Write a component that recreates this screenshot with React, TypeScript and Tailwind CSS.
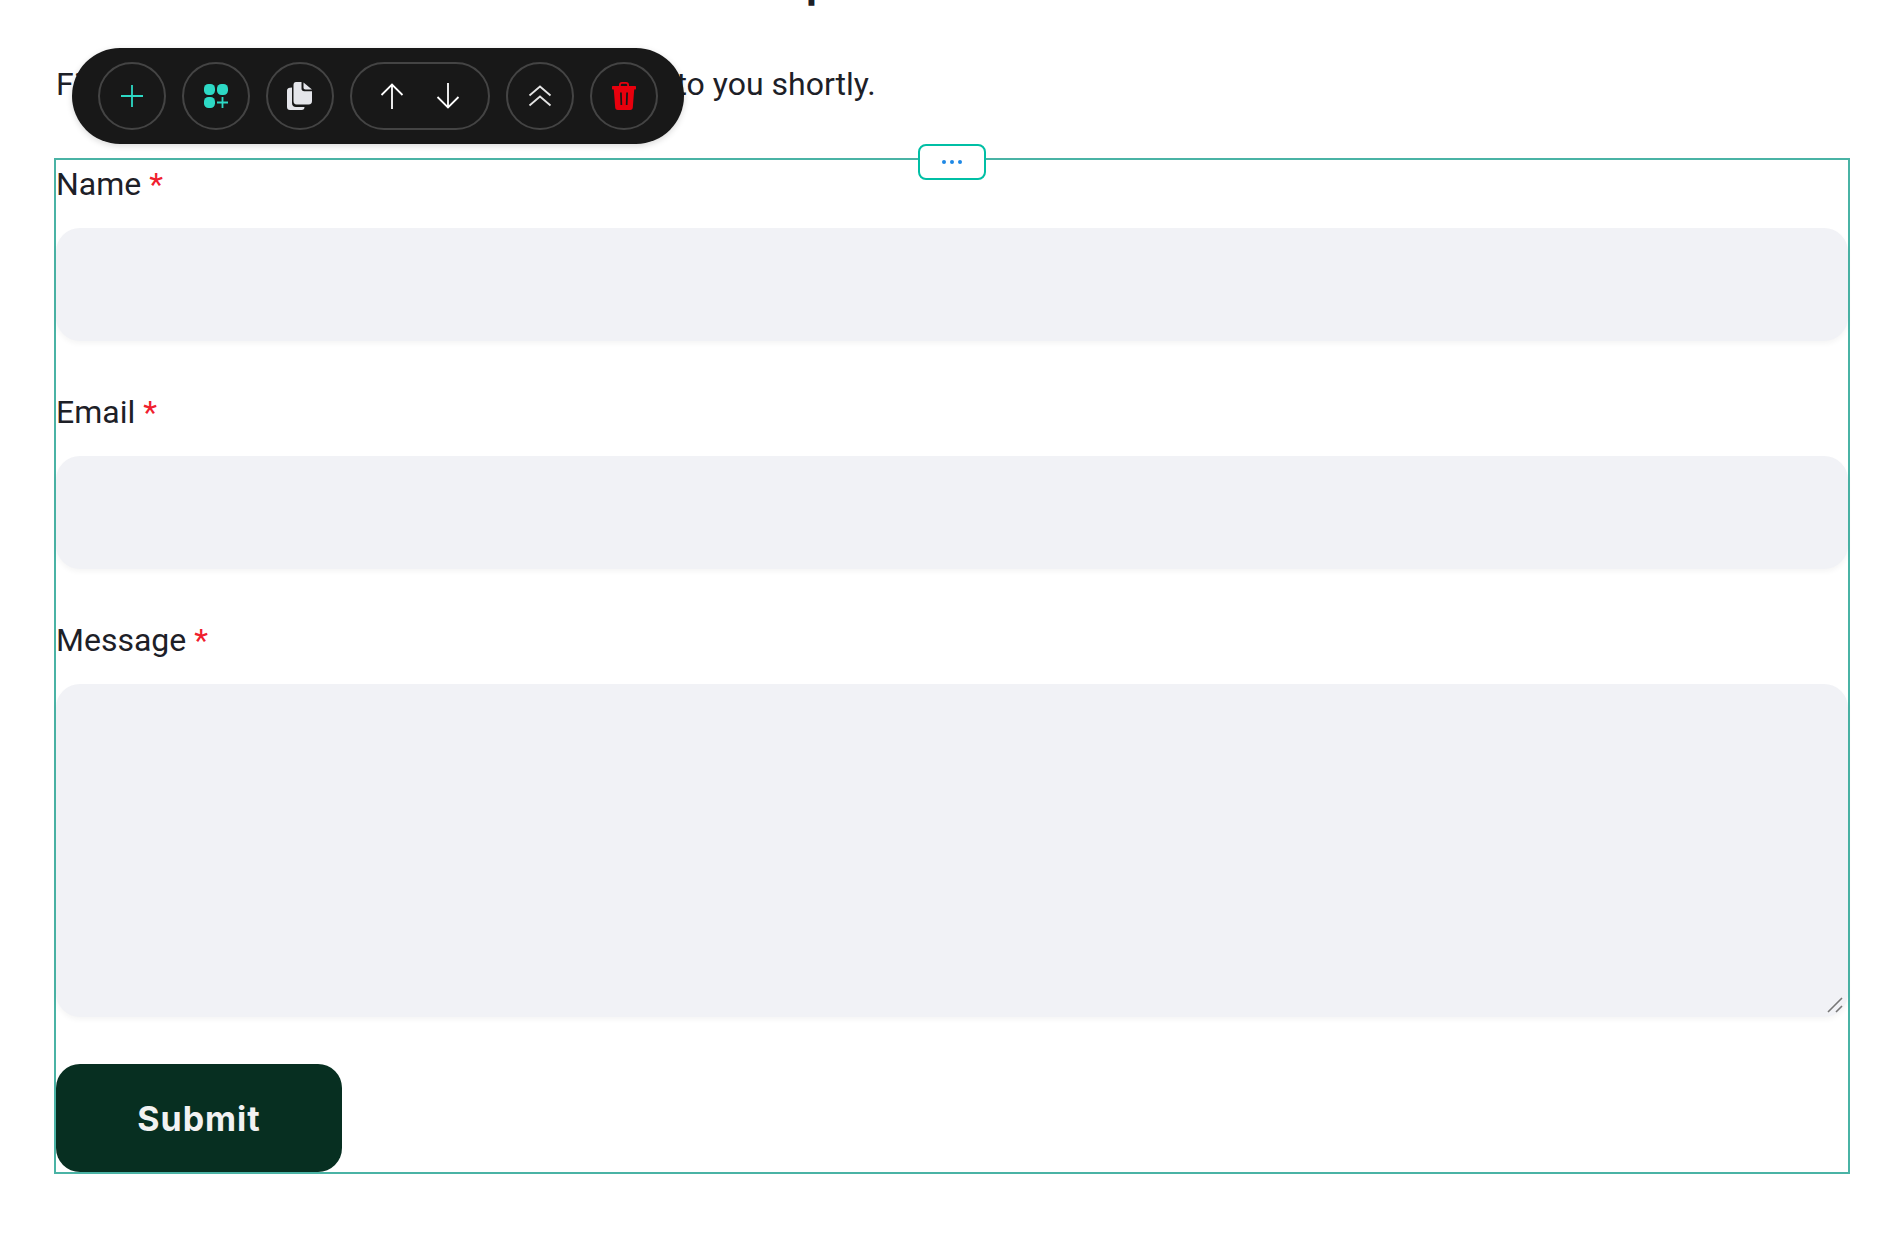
const roboto = "font-['Roboto',sans-serif]"

function CircleButton({ children }: { children: React.ReactNode }) {
  return (
    <button className="flex h-[68px] w-[68px] items-center justify-center rounded-full border-2 border-[#444444]">
      {children}
    </button>
  )
}

function Toolbar() {
  return (
    <div className="absolute left-[72px] top-[48px] z-10 flex h-[96px] w-[612px] items-center gap-4 rounded-[48px] bg-[#181818] pl-[26px] shadow-[0_2px_6px_rgba(0,0,0,0.15)]">
      <CircleButton>
        <svg width="24" height="24" viewBox="0 0 24 24" fill="none" stroke="#2dd9c5" strokeWidth="1.8">
          <path d="M12 1v22M1 12h22" />
        </svg>
      </CircleButton>
      <CircleButton>
        <svg width="24" height="24" viewBox="0 0 24 24" fill="#2dd9c5">
          <rect x="0" y="0" width="11" height="11" rx="4.5" />
          <rect x="13" y="0" width="11" height="11" rx="4.5" />
          <rect x="0" y="13" width="11" height="11" rx="4.5" />
          <path d="M17.6 13h1.8v4.6H24v1.8h-4.6V24h-1.8v-4.6H13v-1.8h4.6z" />
        </svg>
      </CircleButton>
      <CircleButton>
        <svg width="26" height="28" viewBox="0 0 26 28" fill="#e4e5ea">
          <path d="M5 5.5v15.5c0 2.5 1.5 4 4 4h8.5c0 1.800-1 3-3 3H3c-2 0-3-1-3-3V8.500c0-2 1.500-3 5-3z" />
          <path d="M9 0h5.500v6.500c0 1.700 1 2.700 2.700 2.700H25v9.800c0 2-1 3.500-3.500 3.500H9.500c-2 0-3-1.500-3-3.500V3c0-2 1-3 2.500-3z" />
          <path d="M16.500 0.500 25 7.500h-6.500c-1.300 0-2-0.700-2-2z" />
        </svg>
      </CircleButton>
      <div className="flex h-[68px] w-[140px] items-center justify-between rounded-full border-2 border-[#444444] px-[28px]">
        <svg width="24" height="26" viewBox="0 0 24 26" fill="none" stroke="#ffffff" strokeWidth="1.800">
          <path d="M12 26V1.500M1.500 12 12 1.500 22.500 12" />
        </svg>
        <svg width="24" height="26" viewBox="0 0 24 26" fill="none" stroke="#ffffff" strokeWidth="1.800">
          <path d="M12 0v24.500M1.500 14 12 24.500 22.500 14" />
        </svg>
      </div>
      <CircleButton>
        <svg width="24" height="22" viewBox="0 0 24 22" fill="none" stroke="#e4e4e4" strokeWidth="1.800">
          <path d="M1.500 10.500 12 1.500l10.500 9M1.500 20.500 12 11.500l10.500 9" />
        </svg>
      </CircleButton>
      <CircleButton>
        <svg width="24" height="28" viewBox="0 0 24 28" fill="#e8000d">
          <path d="M7 5V3c0-1.700 1-3 3-3h4c2 0 3 1.300 3 3v2h-1.800V3.200c0-.8-.5-1.400-1.400-1.400h-3.600c-.9 0-1.400.6-1.400 1.400V5z" />
          <path fillRule="evenodd" d="M1 4h22c.7 0 1 .4 1 1v1.500c0 .6-.3 1-1 1h-.8L20.800 25.500c-.1 1.600-1 2.500-2.600 2.500H5.800c-1.600 0-2.500-.9-2.600-2.500L1.800 7.500H1c-.7 0-1-.4-1-1V5c0-.6.3-1 1-1zM8 10.500l.5 12.500h1.700L9.800 10.500zM14.200 10.500 13.800 23h1.700l.5-12.500z" />
        </svg>
      </CircleButton>
    </div>
  )
}

function Label({ text }: { text: string }) {
  return (
    <label className="mb-[22px] block h-[46px] text-[32px] leading-[48px] text-[#1d2027]">
      {text} <span className="text-[#f0202e]">*</span>
    </label>
  )
}

const fieldClass =
  'block w-full rounded-[24px] bg-[#f1f2f6] shadow-[0_3px_5px_rgba(0,0,0,0.04)] outline-none'

export default function App() {
  return (
    <div className={`relative h-[1238px] overflow-hidden bg-white pl-[54px] pr-[40px] ${roboto}`}>
      <h2 className="-mt-[36px] h-[40px] pl-[752px] font-['Inter',sans-serif] text-[40px] font-bold leading-[40px] text-[#1d2027]">
        p
      </h2>
      <p className="mt-[49px] h-[62px] whitespace-nowrap pl-[2px] text-[32px] leading-[62px] text-[#1d2027]">
        Fill out the form below and we will get back to you shortly.
      </p>
      <Toolbar />

      <form className="relative mt-[43px] h-[1016px] border-2 border-[#4ab3a5]">
        <button
          type="button"
          className="absolute left-[862px] top-[-16px] flex h-[36px] w-[68px] items-center justify-center gap-[4px] rounded-[8px] border-2 border-[#00bfa5] bg-white"
        >
          <span className="h-[4px] w-[4px] rounded-full bg-[#1e88e5]" />
          <span className="h-[4px] w-[4px] rounded-full bg-[#1e88e5]" />
          <span className="h-[4px] w-[4px] rounded-full bg-[#1e88e5]" />
        </button>

        <Label text="Name" />
        <input type="text" className={`${fieldClass} mb-[47px] h-[113px]`} />
        <Label text="Email" />
        <input type="email" className={`${fieldClass} mb-[47px] h-[113px]`} />
        <Label text="Message" />
        <div className="relative mb-[47px]">
          <textarea className={`${fieldClass} h-[333px] resize-none`} />
          <svg className="absolute bottom-[4px] right-[5px]" width="16" height="16" viewBox="0 0 16 16" fill="none" stroke="#777777" strokeWidth="1.6">
            <path d="M1 15 15 1M9 15l6-6" />
          </svg>
        </div>
        <button
          type="submit"
          className="h-[108px] w-[286px] rounded-[24px] bg-[#072f21] font-['Inter',sans-serif] text-[34px] font-bold tracking-[1px] text-[#f2f2f2]"
        >
          Submit
        </button>
      </form>
    </div>
  )
}
